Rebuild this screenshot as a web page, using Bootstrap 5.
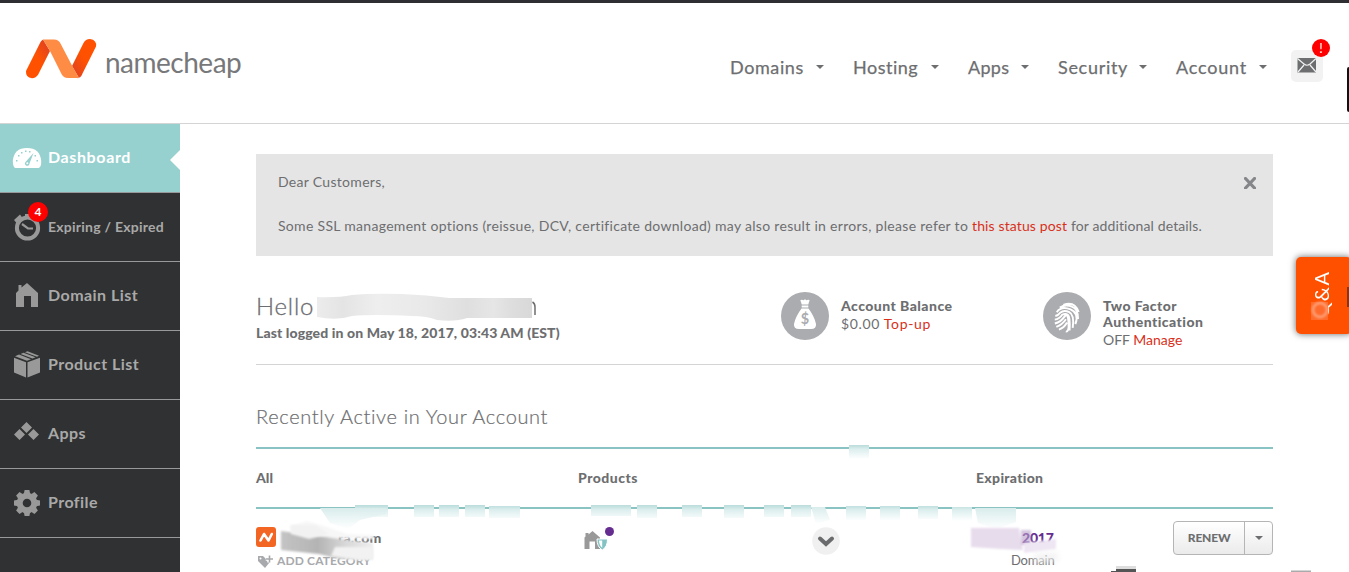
<!DOCTYPE html>
<html lang="en">
<head>
<meta charset="utf-8">
<title>Dashboard</title>
<meta name="viewport" content="width=device-width, initial-scale=1">
<link href="https://cdn.jsdelivr.net/npm/bootstrap@5.3.0/dist/css/bootstrap.min.css" rel="stylesheet">
<style>
:root{--ink:#6d6e70;--red:#d9301a;--teal:#89c3c2}
html,body{height:572px;overflow:hidden}
body{font-family:Lato,"Open Sans",sans-serif;font-size:14px;line-height:22px;color:var(--ink);background:#fff}
a{color:var(--red);text-decoration:none}
svg{display:block}
.topbar{height:124px;border-top:3px solid #2d2f33;border-bottom:1px solid #d4d4d4;padding:0 26px 0 25px}
.brand-word{font-size:28px;font-weight:400;line-height:30px;letter-spacing:-.5px;margin:0 0 2px 7px;color:#77787a}
.mainnav{font-size:18px;padding-top:7px}
.mainnav .nav-link{padding:0 29px 0 0;color:var(--ink);line-height:24px;width:115px;-webkit-text-stroke:.25px}
.mainnav .nav-link:nth-child(1){width:123px;letter-spacing:.6px;margin-left:-1px}
.mainnav .nav-link:nth-child(2){letter-spacing:.5px}
.mainnav .nav-link:nth-child(3){width:90px;letter-spacing:.3px}
.mainnav .nav-link:nth-child(4){width:118px;letter-spacing:.7px}
.mainnav .nav-link:nth-child(5){padding-right:24px;letter-spacing:.8px}
.tri{width:0;height:0;border:4px solid transparent;border-top-color:currentColor;border-bottom:0}
.mailbox{width:32px;height:32px;border-radius:5px;background:#f2f2f2;margin-top:6px}
.dot{position:absolute;border-radius:50%;background:#f00;color:#fff;text-align:center}
.dot-mail{width:18px;height:18px;line-height:18px;font-size:13px;left:21px;top:-11px}
.dot-exp{width:20px;height:20px;line-height:19px;font-size:12px;font-weight:700;left:28px;top:9px}
.edge{position:absolute;right:0;top:67px;width:2px;height:45px;background:#111;border-radius:3px 0 0 3px}
.side{width:180px;height:448px;background:#303132}
.side .nav-link{height:69px;padding:0 0 3px 48px;border-bottom:1px solid #999;color:#a9a9a9;font-weight:700;font-size:16px;letter-spacing:.45px;position:relative;white-space:nowrap}
.side .nav-link svg{position:absolute;left:0;top:0}
.side .active{background:#97d1cf;color:#fff;letter-spacing:.62px}
.side .active::after{content:"";position:absolute;right:0;top:26px;border:10px solid transparent;border-left:0;border-right-color:#fff}
.side .small-item{font-size:14px;letter-spacing:.24px;padding-bottom:0}
.content{width:1017px;margin-left:76px;padding-top:30px}
.notice{height:102px;background:#e5e5e5;border-radius:0;padding:17px 17px 0 22px}
.notice p{letter-spacing:.3px;margin:0 0 22px;white-space:nowrap}
.notice p a{letter-spacing:.12px}
.notice .tail{letter-spacing:.12px}
.greet{height:109px;border-bottom:1px solid #d4d4d4}
.hello{font-size:24px;font-weight:300;line-height:32px;letter-spacing:.8px;margin:34px 0 1px;-webkit-text-stroke:.3px}
.heavy{font-weight:900}
.last-log{line-height:20px;letter-spacing:.11px}
.stat{padding-top:36px}
.stat b{display:block;font-weight:900;line-height:16px;letter-spacing:.46px;padding-top:0;margin-bottom:1px}
.stat div{line-height:18px;padding-top:6px;margin-left:12px}
.stat-bal{width:262px}.stat-two{width:230px}
.amount{letter-spacing:.65px}
.recent{font-size:20px;font-weight:300;line-height:30px;letter-spacing:.65px;margin:36px 0 16px;-webkit-text-stroke:.2px}
.cols{height:62px;border:solid var(--teal);border-width:2px 0;letter-spacing:.3px}
.c1{width:322px}.c2{width:398px}
.entry{height:64px;padding-top:12px}
.cat{font-size:12px;font-weight:700;color:#a8a9ac;line-height:16px;letter-spacing:.14px}
.renew{height:34px;border:1px solid #b5b5b5;border-radius:4px;background:linear-gradient(#fff,#ebebeb);width:100px}
.renew .btn{border:0;border-radius:0;padding:0;font-size:12px;font-weight:900;color:var(--ink);width:71px;letter-spacing:-.15px}
.renew .btn+.btn{border-left:1px solid #b5b5b5;width:28px}
.qa{position:absolute;right:-3px;top:257px;width:56px;height:77px;border-radius:5px;background:#ff5000;box-shadow:0 0 7px rgba(0,0,0,.6)}
.qa span{position:absolute;left:12px;top:14px;writing-mode:vertical-rl;transform:rotate(180deg);color:#fff;font-size:20px;line-height:26px;letter-spacing:1px}
.smudge{position:absolute;left:0;top:0;pointer-events:none}
</style>
</head>
<body class="position-relative">
<header class="topbar d-flex align-items-center">
  <a class="d-flex align-items-center me-auto" href="#">
    <svg width="73" height="40" viewBox="25 39 73 40" style="margin-top:-8px">
      <defs>
        <linearGradient id="ga" x1="0" y1="1" x2="1" y2="0"><stop offset=".5" stop-color="#ff5100"/><stop offset="1" stop-color="#d93f2b"/></linearGradient>
        <linearGradient id="gb" x1="1" y1="0" x2="0" y2="1"><stop offset=".5" stop-color="#ff5100"/><stop offset="1" stop-color="#d93f2b"/></linearGradient>
      </defs>
      <path d="M43 39.500 L50 51 L38.200 74.500 Q36 78.200 32 78.200 Q25.500 77.500 26 71 L40 43 Q41.500 39.500 45 39.300Z" fill="url(#ga)"/>
      <path d="M79 78 L72 66 L83.500 43 Q85.500 39 90 39 Q97 40 96 46.500 L82.500 73.500 Q81 78 77 78.200Z" fill="url(#gb)"/>
      <path d="M43 39.500 H54 Q58.500 39.500 60.500 43.500 L72.500 66.500 L79 78 H68 Q63.500 78 61.500 74 L50 51Z" fill="#ff8c44"/>
    </svg>
    <span class="brand-word">namecheap</span>
  </a>
  <nav class="mainnav nav flex-nowrap">
    <a class="nav-link d-flex align-items-center" href="#">Domains<i class="tri ms-auto"></i></a>
    <a class="nav-link d-flex align-items-center" href="#">Hosting<i class="tri ms-auto"></i></a>
    <a class="nav-link d-flex align-items-center" href="#">Apps<i class="tri ms-auto"></i></a>
    <a class="nav-link d-flex align-items-center" href="#">Security<i class="tri ms-auto"></i></a>
    <a class="nav-link d-flex align-items-center" href="#">Account<i class="tri ms-auto"></i></a>
  </nav>
  <a class="mailbox position-relative" href="#">
    <svg width="32" height="32"><rect x="6.500" y="8" width="18.500" height="14.500" fill="#6d6e70"/><path d="M6.500 8.500l6.500 5.500q3 2.500 6 0l6-5.500M7 22l6-7M25 22l-6-7" fill="none" stroke="#f2f2f2" stroke-width="1.200"/></svg>
    <span class="dot dot-mail">!</span>
  </a>
</header>
<div class="edge"></div>

<div class="d-flex">
  <nav class="side nav flex-column flex-nowrap flex-shrink-0">
    <a class="nav-link active d-flex align-items-center" href="#">
      <svg width="48" height="68"><path d="M15.500 44Q13 43.500 12.800 37Q14 24 27 24T41.200 37Q41.500 43 38.500 44Z" fill="#fff"/><g fill="#97d1cf"><path d="M33.500 29l-4 10.500a2.300 2.300 0 1 1-4-1.500z"/><rect x="16" y="36" width="1.500" height="1.500"/><rect x="18" y="31" width="1.500" height="1.500"/><rect x="21" y="28" width="1.500" height="1.500"/><rect x="25" y="26.500" width="1.500" height="1.500"/><rect x="29" y="27" width="1.500" height="1.500"/><rect x="34.500" y="31" width="1.500" height="1.500"/><rect x="36.500" y="36" width="1.500" height="1.500"/></g><circle cx="27.300" cy="39.300" r="1" fill="#fff"/></svg>
      Dashboard</a>
    <a class="nav-link small-item d-flex align-items-center" href="#">
      <svg width="48" height="68"><circle cx="27.500" cy="35" r="10.600" fill="none" stroke="#999" stroke-width="4"/><path d="M22 31l6 4.500h5" fill="none" stroke="#999" stroke-width="2.200"/><path d="M14 27l6-5.500 2.500 3.500-6 5z M25 21h5v4h-5z" fill="#999"/></svg>
      <span class="dot dot-exp">4</span>Expiring / Expired</a>
    <a class="nav-link d-flex align-items-center" href="#">
      <svg width="48" height="68"><path d="M16 45V31l2.500-2.500V23h3v2.500L27 21l11 10V45h-7V34h-7v11z" fill="#999"/></svg>
      Domain List</a>
    <a class="nav-link d-flex align-items-center" href="#">
      <svg width="48" height="68"><path d="M14 27.500l12 4.500v15.200l-12-5z M40 27.500l-12.500 4.500v15.200l12.500-5z M15 26l4-1.600 12 4.600-4 1.600z M20.500 23.700l3-1.200 12 4.500-3 1.300z M25 22l2.500-1 11.500 4.500-2 1z" transform="translate(0 -.8)" fill="#999"/></svg>
      Product List</a>
    <a class="nav-link d-flex align-items-center" href="#">
      <svg width="48" height="68"><path d="M26.500 22l5.500 5.500-5.500 5.500-5.500-5.500z M19.500 29l5.500 5.500-5.500 5.500-5.500-5.500z M33.500 29l5.500 5.500-5.500 5.500-5.500-5.500z" fill="#999"/></svg>
      Apps</a>
    <a class="nav-link d-flex align-items-center" href="#">
      <svg width="48" height="68"><g transform="translate(27 34)"><circle r="7.300" fill="none" stroke="#999" stroke-width="6"/><g fill="#999"><path id="tooth" d="M-3.200-9l.8-4h4.800l.8 4z M-3.200 9l.8 4h4.800l.8-4z"/><use href="#tooth" transform="rotate(45)"/><use href="#tooth" transform="rotate(90)"/><use href="#tooth" transform="rotate(135)"/></g></g></svg>
      Profile</a>
  </nav>

  <main class="content">
    <section class="notice d-flex justify-content-between">
      <div>
        <p>Dear Customers,</p>
        <p>Some SSL management options (reissue, DCV, certificate download) may also result in errors, please refer to <a href="#">this status post</a> <span class="tail">for additional details.</span></p>
      </div>
      <svg width="12" height="12" style="margin-top:6px"><path d="M1.500 1.500l9 9.500M10.500 1.500l-9 9.500" stroke="#85868a" stroke-width="3.200" stroke-linecap="round"/></svg>
    </section>

    <section class="greet d-flex">
      <div class="me-auto">
        <h1 class="hello">Hello</h1>
        <div class="heavy last-log">Last logged in on May 18, 2017, 03:43 AM (EST)</div>
      </div>
      <div class="stat stat-bal d-flex">
        <svg width="48" height="48" class="flex-shrink-0"><circle cx="24" cy="24" r="24" fill="#abacb0"/><path d="M20 10q-1.500-2.500 1-2.300l1.500.5 1.500-1 1.500 1 1.500-.5q2.500-.2 1 2.300l-.7 2.500h-6.600zM20.700 13.500h6.600v2h-6.600zM20.500 16.500h7q6 8 7.500 15.500 .5 5-5 5H18q-5.500 0-5-5 1.500-7.500 7.500-15.500z" fill="#fff"/><text x="24" y="32" text-anchor="middle" font-size="14.500" font-weight="700" fill="#abacb0">$</text></svg>
        <div><b>Account Balance</b><span class="amount">$0.00 <a href="#">Top-up</a></span></div>
      </div>
      <div class="stat stat-two d-flex">
        <svg width="48" height="48" class="flex-shrink-0"><circle cx="24" cy="24" r="24" fill="#abacb0"/><g transform="translate(24 25) rotate(25)" fill="none" stroke="#fff" stroke-width="1.900"><path d="M-8.500-9.500Q0-18 8.500-9.500M-10.500-5.500Q-7-11 0-11.500T10.800-3M-11.300 0Q-10-8 0-8.300T10.600 3M-11 4Q-8.500 2-8 -1 -6-5.500 0-5.300T9.800 7.500M-10 7.500Q-6 5-5.300 0 -3-3 0-2.300T8 11M-8.300 11Q-3.500 7-2.500 1T3.500 4 5 13.500M-5.500 13.500Q-1 9 0 2.500M-2 14.800Q2 11 2.300 5"/></g></svg>
        <div><b>Two Factor<br>Authentication</b>OFF <a href="#">Manage</a></div>
      </div>
    </section>

    <h2 class="recent">Recently Active in Your Account</h2>
    <div class="cols d-flex align-items-center heavy">
      <div class="c1" style="letter-spacing:0">All</div><div class="c2" style="letter-spacing:.5px">Products</div><div>Expiration</div>
    </div>

    <div class="entry d-flex">
      <div class="c1">
        <div class="d-flex">
          <svg width="20" height="20" style="margin:6px 0 0"><rect width="20" height="20" rx="3" fill="#f36523"/><path d="M4.500 13.500l3.500-6.500 4.500 6.500 3.300-6.500" fill="none" stroke="#fff" stroke-width="2.600" stroke-linecap="round" stroke-linejoin="round"/></svg>
          <span class="heavy" style="margin:6px 0 0 62px;letter-spacing:.2px">ra.com</span>
        </div>
        <div class="d-flex align-items-center cat" style="margin-top:4px">
          <svg width="21" height="16"><path d="M2 3h5l6.500 6.500-4.500 5.500L2 8z" fill="#a8a9ac"/><circle cx="4.500" cy="5.500" r="1" fill="#fff"/><path d="M13 2.500v7M9.800 6h7" stroke="#fff" stroke-width="3.500"/><path d="M13.500 2.500v7M10 6h7" stroke="#a8a9ac" stroke-width="1.600"/></svg>ADD CATEGORY</div>
      </div>
      <div class="c2 d-flex">
        <svg width="34" height="32" style="margin-left:4px"><path d="M2.500 28V16.500l1-1V12h3v1.500L10.500 10l7.500 6.500V28h-5v-7.500H7.500V28z" fill="#999"/><path d="M15 18h10.500q0 8-5.200 11Q15 26 15 18z" fill="#84c3c3" stroke="#fff"/><path d="M17 19.500h3.200v7.300q-3-2.500-3.200-7.300z" fill="#fff"/><circle cx="27.500" cy="10.500" r="4.500" fill="#662d91"/></svg>
        <svg width="28" height="28" style="margin:6px 0 0 196px"><circle cx="14" cy="14" r="13.800" fill="#f0f0f0"/><path d="M8 11.500l6 5.500 6-5.500" fill="none" stroke="#6a6b6d" stroke-width="4" stroke-linecap="round"/></svg>
      </div>
      <div style="width:197px;letter-spacing:-.2px">
        <div class="heavy" style="margin:6px 0 0 46px;color:#662d91;letter-spacing:-.2px">2017</div>
        <div style="font-size:13px;margin-left:35px">Domain</div>
      </div>
      <div class="renew d-flex"><button class="btn">RENEW</button><button class="btn d-flex align-items-center justify-content-center"><i class="tri"></i></button></div>
    </div>
  </main>
</div>

<div class="qa"><span>Q&amp;A</span></div>

<svg class="smudge" width="1349" height="572">
  <defs>
    <filter id="b1" x="-20%" y="-50%" width="140%" height="200%"><feGaussianBlur stdDeviation="1.200"/></filter>
    <filter id="b3" x="-20%" y="-50%" width="140%" height="200%"><feGaussianBlur stdDeviation="3"/></filter>
    <linearGradient id="gh"><stop stop-color="#ececec"/><stop offset=".12" stop-color="#e4e4e4"/><stop offset=".28" stop-color="#eee"/><stop offset=".5" stop-color="#e9e9e9"/><stop offset=".7" stop-color="#dfdfdf"/><stop offset=".82" stop-color="#e6e6e6"/><stop offset=".9" stop-color="#dedede"/><stop offset="1" stop-color="#d8d8d8"/></linearGradient>
    <linearGradient id="gt" x2="0" y2="1"><stop stop-color="#b9dcdb"/><stop offset=".3" stop-color="#dceeee"/><stop offset="1" stop-color="#fff"/></linearGradient>
    <linearGradient id="gs" x2="0" y2="1"><stop stop-color="#d9ecec"/><stop offset="1" stop-color="#fff"/></linearGradient>
    <linearGradient id="gm" x1="0" x2="1"><stop stop-color="#c4c4c4"/><stop offset=".4" stop-color="#b4b4b4"/><stop offset=".7" stop-color="#d8d8d8"/><stop offset="1" stop-color="#eee"/></linearGradient>
  </defs>
  <path d="M317 297q20 1 35-2 20-2 50-1 25 1 47 4h83v20h-65q-12 4-30 2-10-4-25-4-40-2-60 0-15 5-35 1z" fill="url(#gh)"/>
  <path d="M532.500 302q2.500 1.500 2.500 5v8" fill="none" stroke="#6d6e70" stroke-width="1.500"/>
  <g fill="url(#gt)">
    <path d="M849 445h20v14h-20z"/>
    <path d="M355 505h33v12h-33zM414 505h20v12h-20zM439 505h20v12h-20zM465 505h20v12h-20zM489 506h31v12h-31zM591 505h40v11h-40zM637 505h20v13h-20zM682 505h20v12h-20zM724 505h20v13h-20zM764 505h20v12h-20zM791 505h20v12h-20zM846 506h20v14h-20zM880 506h20v14h-20zM918 506h20v13h-20zM952 507h20v14h-20z"/>
  </g>
  <g fill="url(#gs)">
    <path d="M320 508h66v6l-26 6-12 9-18-6z"/>
    <path d="M811 507h14l5 13-14 4z"/>
    <path d="M975 508h41v14l-20 7-18-6z"/>
  </g>
  <path d="M291 526l16-5 20 6 20 7 27 1v4l-54-1z" fill="#f7f7f7" filter="url(#b1)"/>
  <path d="M281 531l30 4 22 3 40 5v17l-34-1-20-5-38-4z" fill="url(#gm)" filter="url(#b1)"/>
  <path d="M290 525h25l14 9-20 5-18-5zM335 547h38v12l-12 1-30-4z" fill="#f2f2f2" filter="url(#b1)"/>
  <path d="M971 528h48l4 22-22-1-30-2z" fill="#e7dcec" filter="url(#b1)"/>
  <path d="M1021 530h10v15h-10z" fill="#b79fca" opacity=".6" filter="url(#b1)"/>
  <path d="M1024 543l32-4v10l-32 4z" fill="#eee6f3" filter="url(#b1)"/>
  <path d="M1034 554l24-2v9l-24 3z" fill="#f0f0f0" opacity=".8" filter="url(#b3)"/>
  <path d="M1116 566h20v3h-20z" fill="#ddd"/><path d="M1111 571h25v1h-25zM1116 569h20v3h-20z" fill="#555"/>
  <path d="M1291 570.500h20v1.500h-20z" fill="#aaa"/>
  <rect x="1311" y="302" width="17" height="18" fill="#ff6b2c"/><circle cx="1320" cy="310" r="7" fill="none" stroke="#ffa37b" stroke-width="2.500" filter="url(#b1)"/>
  <path d="M1347 287h2v20h-2z" fill="#8c3410"/>
</svg>
<script src="https://cdn.jsdelivr.net/npm/bootstrap@5.3.0/dist/js/bootstrap.bundle.min.js"></script>
</body>
</html>
